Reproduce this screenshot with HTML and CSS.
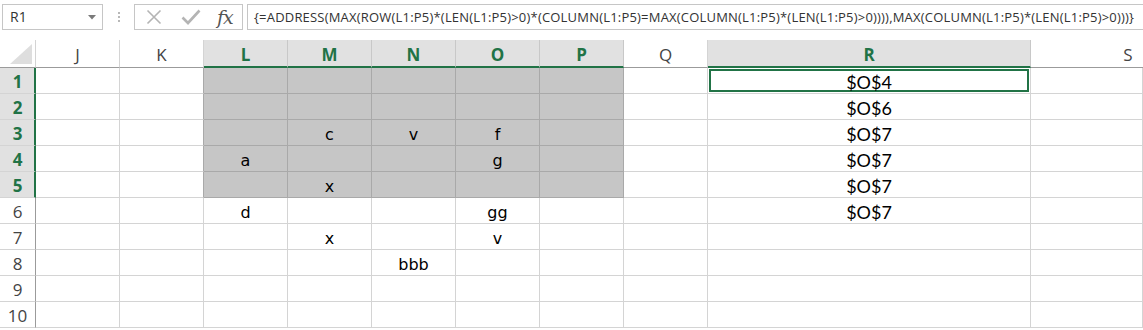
FILE: index.html
```html
<!DOCTYPE html>
<html>
<head>
<meta charset="utf-8">
<link rel="stylesheet" href="styles.css">
</head>
<body>
<div class="fbar">
  <div class="namebox">
    <span class="nb-text">R1</span>
    <svg class="nb-arrow" width="8" height="5" viewBox="0 0 8 5"><path d="M0 0H8L4 4.5Z" fill="#7a7a7a"/></svg>
  </div>
  <div class="dots"><i></i><i></i><i></i></div>
  <div class="btns">
    <svg class="ico" width="16" height="16" viewBox="0 0 16 16"><path d="M1.5 1.5L14.5 14.5M14.5 1.5L1.5 14.5" stroke="#b4b4b4" stroke-width="1.6" fill="none"/></svg>
    <svg class="ico" width="20" height="16" viewBox="0 0 20 16"><path d="M1.5 8.5L7 14L18.5 1.5" stroke="#b4b4b4" stroke-width="2.6" fill="none"/></svg>
    <span class="fx">fx</span>
  </div>
  <div class="formula">{=ADDRESS(MAX(ROW(L1:P5)*(LEN(L1:P5)&gt;0)*(COLUMN(L1:P5)=MAX(COLUMN(L1:P5)*(LEN(L1:P5)&gt;0)))),MAX(COLUMN(L1:P5)*(LEN(L1:P5)&gt;0)))}</div>
</div>

<div class="sheet">
  <div class="corner"><svg width="22" height="20" viewBox="0 0 22 20"><path d="M22 0V20H0Z" fill="#dedede"/></svg></div>
  <div class="ch">J</div><div class="ch">K</div>
  <div class="ch on">L</div><div class="ch on">M</div><div class="ch on">N</div><div class="ch on">O</div><div class="ch on">P</div>
  <div class="ch">Q</div><div class="ch on">R</div><div class="ch last">S</div>

  <div class="rh on">1</div><div class="c"></div><div class="c k5"></div>
  <div class="c sel"></div><div class="c sel"></div><div class="c sel"></div><div class="c sel"></div><div class="c sel"></div>
  <div class="c"></div><div class="c r act">$O$4</div><div class="c"></div>

  <div class="rh on">2</div><div class="c"></div><div class="c k5"></div>
  <div class="c sel"></div><div class="c sel"></div><div class="c sel"></div><div class="c sel"></div><div class="c sel"></div>
  <div class="c"></div><div class="c r">$O$6</div><div class="c"></div>

  <div class="rh on">3</div><div class="c"></div><div class="c k5"></div>
  <div class="c sel"></div><div class="c sel">c</div><div class="c sel">v</div><div class="c sel">f</div><div class="c sel"></div>
  <div class="c"></div><div class="c r">$O$7</div><div class="c"></div>

  <div class="rh on">4</div><div class="c"></div><div class="c k5"></div>
  <div class="c sel">a</div><div class="c sel"></div><div class="c sel"></div><div class="c sel">g</div><div class="c sel"></div>
  <div class="c"></div><div class="c r">$O$7</div><div class="c"></div>

  <div class="rh on">5</div><div class="c"></div><div class="c k5"></div>
  <div class="c sel"></div><div class="c sel">x</div><div class="c sel"></div><div class="c sel"></div><div class="c sel"></div>
  <div class="c"></div><div class="c r">$O$7</div><div class="c"></div>

  <div class="rh">6</div><div class="c"></div><div class="c"></div>
  <div class="c">d</div><div class="c"></div><div class="c"></div><div class="c">gg</div><div class="c"></div>
  <div class="c"></div><div class="c r">$O$7</div><div class="c"></div>

  <div class="rh">7</div><div class="c"></div><div class="c"></div>
  <div class="c"></div><div class="c">x</div><div class="c"></div><div class="c">v</div><div class="c"></div>
  <div class="c"></div><div class="c r"></div><div class="c"></div>

  <div class="rh">8</div><div class="c"></div><div class="c"></div>
  <div class="c"></div><div class="c"></div><div class="c">bbb</div><div class="c"></div><div class="c"></div>
  <div class="c"></div><div class="c r"></div><div class="c"></div>

  <div class="rh">9</div><div class="c"></div><div class="c"></div>
  <div class="c"></div><div class="c"></div><div class="c"></div><div class="c"></div><div class="c"></div>
  <div class="c"></div><div class="c r"></div><div class="c"></div>

  <div class="rh">10</div><div class="c"></div><div class="c"></div>
  <div class="c"></div><div class="c"></div><div class="c"></div><div class="c"></div><div class="c"></div>
  <div class="c"></div><div class="c r"></div><div class="c"></div>
</div>
</body>
</html>
```

FILE: styles.css
```css
* { box-sizing: border-box; }
html, body { margin: 0; padding: 0; background: #fff; overflow: hidden; }
body { width: 1143px; height: 330px; font-family: "Open Sans", "DejaVu Sans", sans-serif; }

.fbar {
  height: 40px;
  display: flex;
  align-items: flex-start;
  padding-top: 4px;
}
.namebox {
  margin-left: 2px;
  width: 101px;
  height: 26px;
  border: 1px solid #c6c6c6;
  display: flex;
  align-items: center;
  justify-content: space-between;
  padding: 0 6px 0 7px;
}
.nb-text { font-size: 14px; color: #333; line-height: 24px; }
.nb-arrow { margin-top: 1px; }
.dots {
  width: 31px;
  height: 26px;
  display: flex;
  flex-direction: column;
  align-items: center;
  justify-content: center;
  gap: 2px;
}
.dots i { display: block; width: 2px; height: 2px; background: #b8b8b8; }
.btns {
  width: 109px;
  height: 26px;
  border: 1px solid #c6c6c6;
  display: flex;
  align-items: center;
  padding-left: 11px;
}
.btns .ico:first-child { margin-right: 19px; }
.btns .ico:nth-child(2) { margin-right: 16px; }
.fx {
  font-family: "DejaVu Serif", "Liberation Serif", serif;
  font-style: italic;
  font-size: 19px;
  color: #555;
  line-height: 24px;
  letter-spacing: -1px;
}
.formula {
  margin-left: 4px;
  flex: 1;
  min-width: 0;
  height: 26px;
  border: 1px solid #c6c6c6;
  border-right: none;
  font-size: 13px;
  letter-spacing: 0.2px;
  color: #333;
  line-height: 24px;
  padding-left: 6px;
  white-space: nowrap;
  overflow: hidden;
}

.sheet {
  display: grid;
  grid-template-columns: 36px repeat(8, 84px) 323px 1fr;
  grid-template-rows: 28px repeat(10, 26px);
  width: 1143px;
}
.corner {
  border-right: 1px solid #d4d4d4;
  border-bottom: 1px solid #9b9b9b;
  display: flex;
  align-items: flex-end;
  justify-content: flex-end;
  padding: 0 3px 3px 0;
}
.ch {
  border-right: 1px solid #d4d4d4;
  border-bottom: 1px solid #9b9b9b;
  font-size: 17px;
  color: #444;
  text-align: center;
  line-height: 26px;
  padding-top: 2px;
}
.ch.last { padding-left: 82px; border-right: none; }
.ch.on {
  background: #e1e1e1;
  color: #217346;
  font-weight: bold;
  border-right-color: #c8c8c8;
  border-bottom: 2px solid #217346;
}
.rh {
  border-right: 1px solid #9b9b9b;
  border-bottom: 1px solid #d4d4d4;
  font-size: 17px;
  color: #444;
  text-align: center;
  line-height: 22px;
  padding-top: 3px;
}
.rh.on {
  background: #e1e1e1;
  color: #217346;
  font-weight: bold;
  border-right: 2px solid #217346;
  padding-left: 1px;
}
.c {
  border-right: 1px solid #d4d4d4;
  border-bottom: 1px solid #d4d4d4;
  display: flex;
  align-items: flex-end;
  justify-content: center;
  font-family: "DejaVu Sans", "Liberation Sans", sans-serif;
  font-size: 16px;
  line-height: 20px;
  color: #000;
}
.c.k5 { border-right-color: #a9a9a9; }
.c.sel {
  background: #c6c6c6;
  border-right-color: #a9a9a9;
  border-bottom-color: #a9a9a9;
}
.c.r {
  font-family: "Lato", "Open Sans", sans-serif;
  font-size: 18px;
  padding-bottom: 1px;
}
.c.act {
  box-shadow: inset 0 0 0 1px #fff, inset 0 0 0 3px #217346;
}
```
